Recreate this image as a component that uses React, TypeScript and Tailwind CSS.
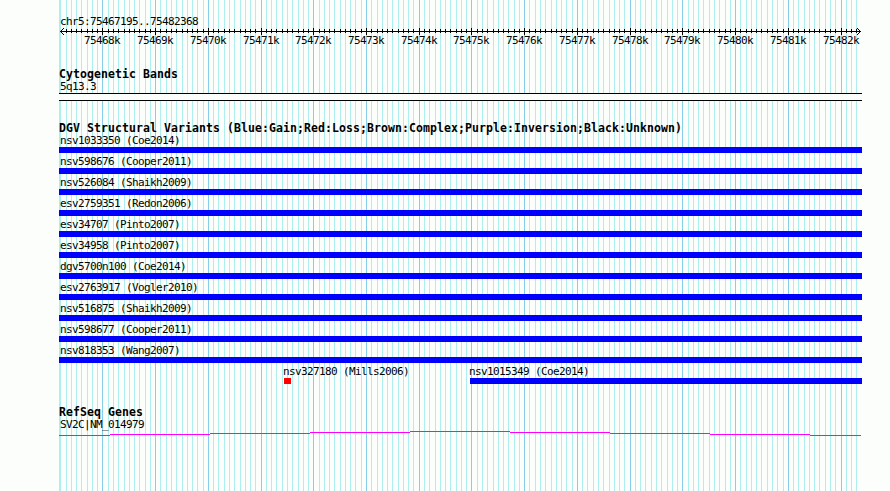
const START = 102.94;
const KB = 52.72;

const ticks = Array.from({ length: 152 }, (_, i) => {
  const n = i - 8;
  return { x: Math.floor(START + (n * KB) / 10 + 0.001), major: n % 10 === 0, n };
}).filter((t) => t.x <= 858);

const majors = ticks.filter((t) => t.major);

const variants = [
  "nsv1033350 (Coe2014)",
  "nsv598676 (Cooper2011)",
  "nsv526084 (Shaikh2009)",
  "esv2759351 (Redon2006)",
  "esv34707 (Pinto2007)",
  "esv34958 (Pinto2007)",
  "dgv5700n100 (Coe2014)",
  "esv2763917 (Vogler2010)",
  "nsv516875 (Shaikh2009)",
  "nsv598677 (Cooper2011)",
  "nsv818353 (Wang2007)",
];

const label =
  "block h-3 whitespace-pre font-['DejaVu_Sans_Mono','Liberation_Mono',monospace] text-[11px] leading-[14px] tracking-[-0.622px] text-black";
const heading =
  "block h-3 whitespace-pre font-['DejaVu_Sans_Mono','Liberation_Mono',monospace] text-[11.5px] leading-3 tracking-[0.077px] font-bold text-black";

function Grid() {
  return (
    <svg className="absolute inset-0" width="890" height="491" shapeRendering="crispEdges">
      <rect x="59" y="0" width="1" height="491" fill="#afeeee" />
      {ticks.map((t) => (
        <rect key={t.n} x={t.x} y="0" width="1" height="491" fill={t.major ? "#87ceeb" : "#afeeee"} />
      ))}
    </svg>
  );
}

function Ruler() {
  return (
    <svg className="block" width="802" height="8" viewBox="59 27 802 8" shapeRendering="crispEdges">
      <rect x="60" y="31" width="801" height="1" />
      {ticks.slice(1).map((t) => (
        <rect key={t.n} x={t.x} y={t.major ? 28 : 29} width="1" height={t.major ? 7 : 4} />
      ))}
      {[1, 2, 3].map((d) => (
        <g key={d}>
          <rect x={60 + d} y={31 - d} width="1" height="1" />
          <rect x={60 + d} y={31 + d} width="1" height="1" />
          <rect x={860 - d} y={31 - d} width="1" height="1" />
          <rect x={860 - d} y={31 + d} width="1" height="1" />
        </g>
      ))}
    </svg>
  );
}

function GeneLine() {
  const segs = [
    [59, 110, 435],
    [110, 210, 434],
    [210, 310, 433],
    [310, 410, 432],
    [410, 510, 431],
    [510, 610, 432],
    [610, 710, 433],
    [710, 810, 434],
    [810, 861, 435],
  ];
  return (
    <svg className="block" width="802" height="5" viewBox="59 431 802 5" shapeRendering="crispEdges">
      {segs.map(([a, b, y]) => (
        <rect key={a} x={a} y={y} width={b - a} height="1" fill="#ff00ff" />
      ))}
    </svg>
  );
}

export default function App() {
  return (
    <div className="relative h-[491px] w-[890px] overflow-hidden bg-[#fcfefc]">
      <Grid />
      <main className="relative ml-[59px] flex w-[803px] flex-col pt-[15px]">
        <span className={`${label} pl-px`}>chr5:75467195..75482368</span>
        <Ruler />
        <div className="-mt-px flex h-3 pl-[25px]">
          {majors.map((t, i) => {
            const next = majors[i + 1];
            return (
              <span key={t.n} className={`${label} shrink-0`} style={{ width: next ? next.x - t.x : 40 }}>
                {75468 + i}k
              </span>
            );
          })}
        </div>

        <section className="pt-[22px]">
          <h2 className={heading}>Cytogenetic Bands</h2>
          <span className={`${label} pl-px`}>5q13.3</span>
          <div className="mt-px h-2 border-y border-black bg-[#fcfefc]" />
        </section>

        <section className="pt-[21px]">
          <h2 className={heading}>DGV Structural Variants (Blue:Gain;Red:Loss;Brown:Complex;Purple:Inversion;Black:Unknown)</h2>
          {variants.map((v) => (
            <div key={v} className="h-[21px]">
              <span className={`${label} pl-px`}>{v}</span>
              <div className="mt-px h-1.5 bg-[#0000ff]" />
            </div>
          ))}
          <div className="flex h-[21px] pl-[225px]">
            <div className="w-[186px]">
              <span className={`${label} -ml-px`}>nsv327180 (Mills2006)</span>
              <div className="mt-px h-1.5 w-[7px] bg-[#ff0000]" />
            </div>
            <div className="w-[392px]">
              <span className={`${label} -ml-px`}>nsv1015349 (Coe2014)</span>
              <div className="mt-px h-1.5 bg-[#0000ff]" />
            </div>
          </div>
        </section>

        <section className="pt-5">
          <h2 className={heading}>RefSeq Genes</h2>
          <span className={`${label} pl-px`}>SV2C|NM_014979</span>
          <div className="pt-px">
            <GeneLine />
          </div>
        </section>
      </main>
    </div>
  );
}
